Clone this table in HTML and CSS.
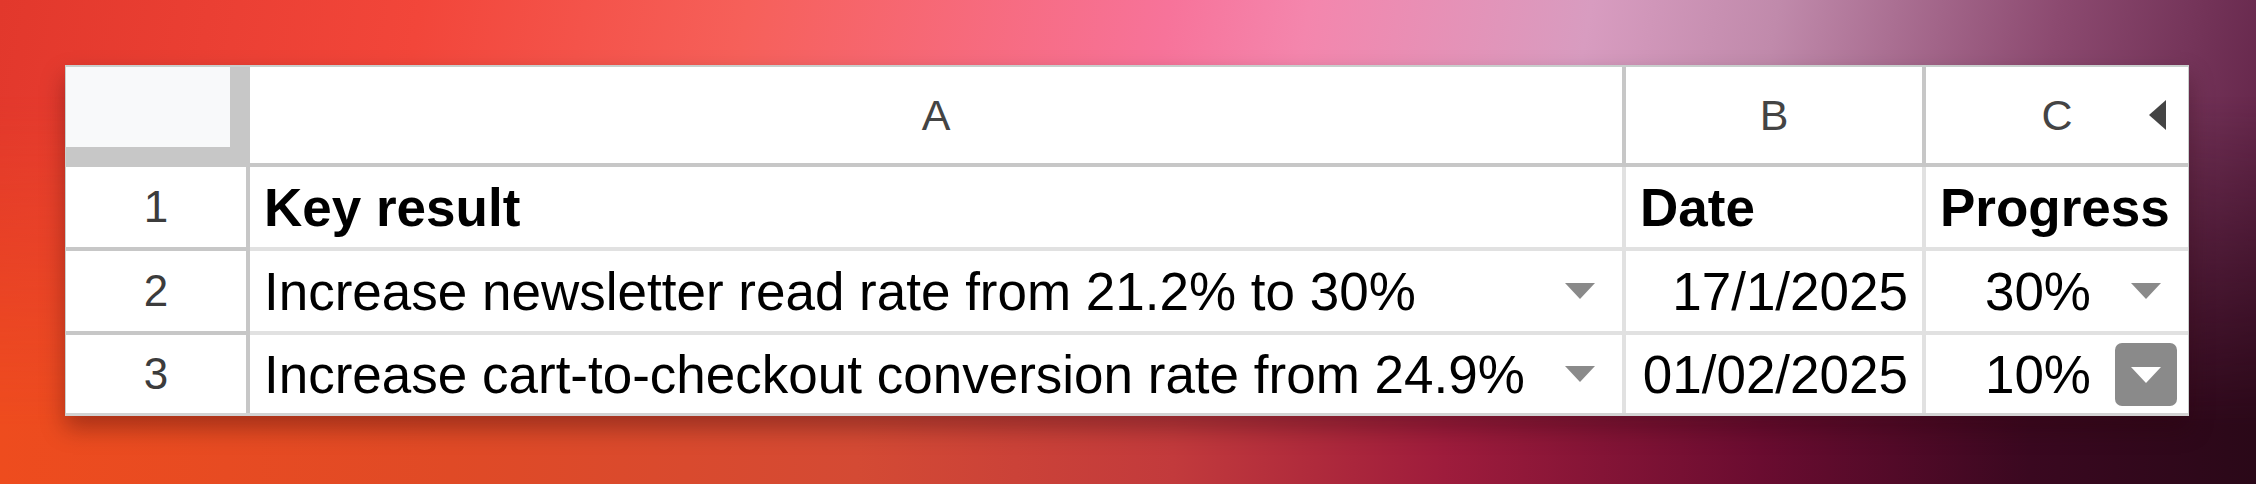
FILE: index.html
```html
<!DOCTYPE html>
<html lang="en">
<head>
<meta charset="utf-8">
<title>Key results</title>
<link rel="stylesheet" href="styles.css">
</head>
<body>
<div class="stage">
  <div class="sheet">
    <div class="corner"></div>
    <div class="colhead">A</div>
    <div class="colhead">B</div>
    <div class="colhead last">C<span class="collapse"></span></div>

    <div class="rowhead">1</div>
    <div class="cell bold">Key result</div>
    <div class="cell bold">Date</div>
    <div class="cell bold last">Progress</div>

    <div class="rowhead">2</div>
    <div class="cell chipcell"><span class="value grow">Increase newsletter read rate from 21.2% to 30%</span><span class="chip"><svg viewBox="0 0 30 16" class="tri"><polygon points="0,0 30,0 15,16"/></svg></span></div>
    <div class="cell right">17/1/2025</div>
    <div class="cell chipcell end last"><span class="value">30%</span><span class="chip"><svg viewBox="0 0 30 16" class="tri"><polygon points="0,0 30,0 15,16"/></svg></span></div>

    <div class="rowhead final">3</div>
    <div class="cell chipcell final"><span class="value grow">Increase cart-to-checkout conversion rate from 24.9%</span><span class="chip"><svg viewBox="0 0 30 16" class="tri"><polygon points="0,0 30,0 15,16"/></svg></span></div>
    <div class="cell right final">01/02/2025</div>
    <div class="cell chipcell end last final"><span class="value">10%</span><span class="chip active"><svg viewBox="0 0 30 16" class="tri"><polygon points="0,0 30,0 15,16"/></svg></span></div>
  </div>
</div>
</body>
</html>
```

FILE: styles.css
```css
* { box-sizing: border-box; }

html, body {
  margin: 0;
  width: 2256px;
  height: 484px;
  overflow: hidden;
}

body {
  position: relative;
  font-family: "Liberation Sans", Arial, sans-serif;
  background:
    linear-gradient(100deg, #e2382c 0%, #f2463a 18%, #f6605a 32%, #f7739a 50%, #f486ad 56%, #d89cc0 68%, #c08aab 76%, #8c4a70 88%, #5c1e42 100%);
}

body::before {
  content: "";
  position: absolute;
  inset: 0;
  background: linear-gradient(90deg, #ee4c1e 0%, #e04a26 20%, #d44a34 38%, #c23a3c 52%, #9e1c3c 64%, #6a0c30 78%, #3a0820 90%, #2a0818 100%);
  -webkit-mask-image: linear-gradient(to bottom, transparent 20%, #000 88%);
  mask-image: linear-gradient(to bottom, transparent 20%, #000 88%);
}

.stage {
  position: relative;
  padding: 65px 0 0 65px;
}

.sheet {
  display: grid;
  grid-template-columns: 184px 1376px 300px 262px;
  grid-template-rows: 100px 84px 84px 78px;
  width: max-content;
  background: #fff;
  border: 1px solid #c9cfcd;
  border-top-width: 2px;
  border-bottom: 3px solid #d2d2d2;
  box-shadow: 0 12px 22px rgba(40, 0, 10, 0.35);
}

.corner {
  background: #f8f9fa;
  border-right: 20px solid #c7c7c7;
  border-bottom: 20px solid #c7c7c7;
}

.colhead {
  position: relative;
  display: flex;
  align-items: center;
  justify-content: center;
  color: #444;
  font-size: 43px;
  border-right: 4px solid #c7c7c7;
  border-bottom: 4px solid #c7c7c7;
}

.colhead.last { border-right: 0; }

.collapse {
  position: absolute;
  right: 22px;
  top: 33px;
  width: 0;
  height: 0;
  border-top: 15px solid transparent;
  border-bottom: 15px solid transparent;
  border-right: 17px solid #444;
}

.rowhead {
  display: flex;
  align-items: center;
  justify-content: center;
  color: #3c3c3c;
  font-size: 44px;
  border-right: 4px solid #c7c7c7;
  border-bottom: 4px solid #c7c7c7;
}

.cell {
  display: flex;
  align-items: center;
  padding: 0 14px;
  color: #000;
  font-size: 53px;
  white-space: nowrap;
  overflow: hidden;
  border-right: 4px solid #e1e1e1;
  border-bottom: 4px solid #e1e1e1;
}

.cell.last { border-right: 0; }
.final { border-bottom: 0; }

.bold { font-weight: bold; }

.right { justify-content: flex-end; }

.chipcell {
  padding-right: 11px;
  gap: 24px;
}

.chipcell.end { justify-content: flex-end; }

.value.grow { flex: 1; }

.chip {
  display: flex;
  align-items: center;
  justify-content: center;
  width: 62px;
  height: 63px;
  border-radius: 7px;
  flex: none;
}

.tri {
  width: 30px;
  height: 16px;
  fill: #8a8a8a;
}

.chip.active {
  background: #8a8a8a;
  margin-top: 1px;
}

.chip.active .tri { fill: #fff; }
```
